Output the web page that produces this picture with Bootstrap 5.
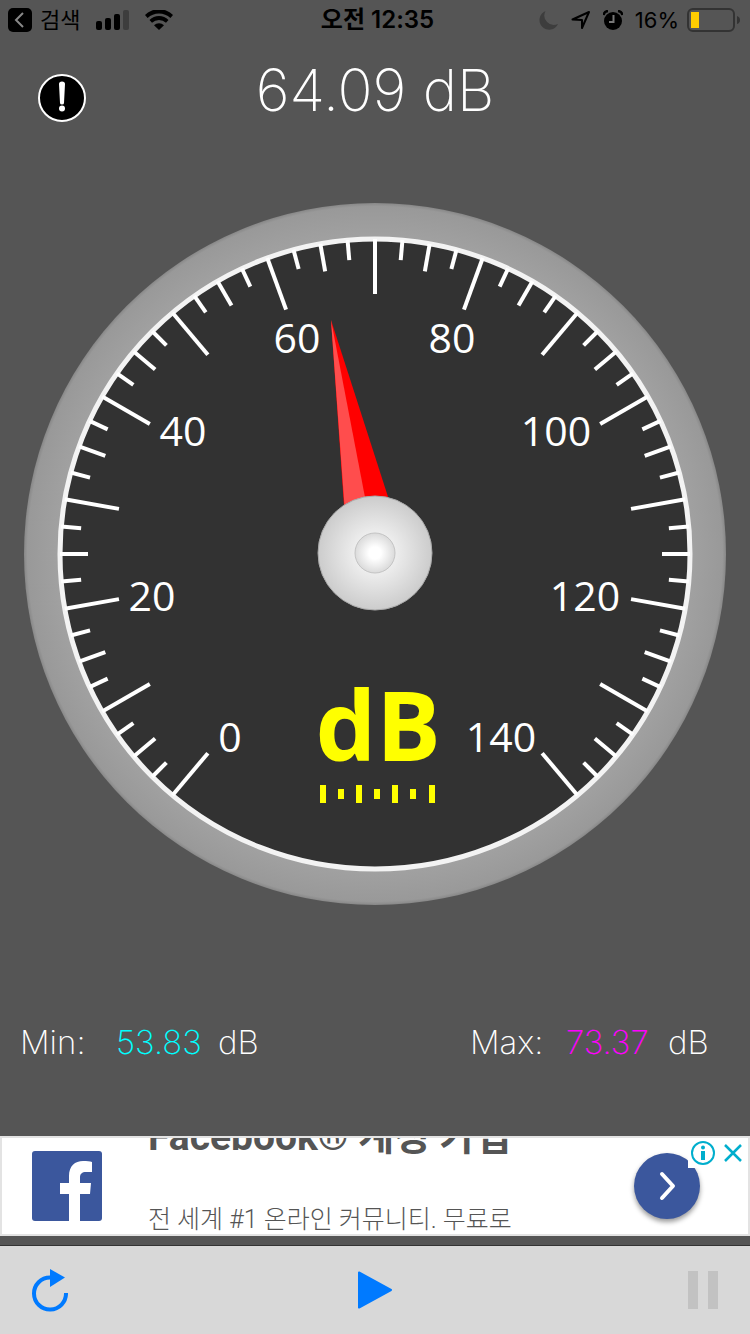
<!DOCTYPE html>
<html lang="ko">
<head>
<meta charset="utf-8">
<meta name="viewport" content="width=device-width, initial-scale=1">
<title>Sound Meter</title>
<link href="https://cdn.jsdelivr.net/npm/bootstrap@5.3.0/dist/css/bootstrap.min.css" rel="stylesheet">
<style>
  body { background: #555; color: #fff; font-family: Inter, "Noto Sans CJK KR", sans-serif; }
  .app-screen { min-height: 100vh; }
  svg { display: block; }

  .status-bar { display: grid; grid-template-columns: 1fr auto 1fr; height: 40px; padding: 0 10px 0 8px; color: #000; font-size: 22px; line-height: 40px; }
  .status-time { font-weight: 600; font-size: 24px; padding-left: 7px; }
  .status-icons { gap: 12px; }
  .back-link, .back-link:hover { color: #000; }

  .meter-head { display: grid; grid-template-columns: 48px 1fr 48px; min-height: 62px; margin-top: 20px; padding: 0 38px; }
  .reading { font-weight: 200; font-size: 58px; line-height: 60px; }
  .gauge-wrap { padding-top: 81px; }
  .dial-num { font: 400 41px "Open Sans", sans-serif; fill: #fff; text-anchor: middle; }
  .dial-unit { font: 700 96px "Open Sans", sans-serif; fill: #ff0; text-anchor: middle; }

  .stats { padding: 113px 44px 69px 20px; font-weight: 200; font-size: 33px; line-height: 48px; }
  .stat-item { display: grid; grid-template-columns: 96px 102px 38px; }
  .min-val { color: #0ff; }
  .max-val { color: #f0f; }

  .ad-banner { height: 100px; background: #fff; border: 2px solid #e3e3e3; color: #555; padding: 0 48px 0 30px; gap: 46px; }
  .ad-copy { height: 96px; overflow: hidden; }
  .ad-title { font-family: Roboto, "Noto Sans CJK KR", sans-serif; font-weight: 700; font-size: 39px; line-height: 48px; margin-top: -25px; }
  .ad-text { font-family: Roboto, "Noto Sans CJK KR", sans-serif; font-weight: 300; font-size: 25px; line-height: 32px; margin-top: 43px; }
  .ad-go { width: 66px; height: 66px; background: #3b579d; box-shadow: 0 3px 5px rgba(0,0,0,.4); }
  .ad-choices { top: 0; right: 0; height: 30px; padding: 0 5px 0 3px; gap: 8px; background: #fff; }

  .tool-bar { display: grid; grid-template-columns: 1fr auto 1fr; align-items: center; height: 89px; margin-top: 9px; padding: 0 32px; background: #d8d8d8; border-top: 1px solid #333; }
</style>
</head>
<body>
<div class="app-screen d-flex flex-column">

  <div class="status-bar">
    <div class="d-flex align-items-center">
      <a href="#" class="back-link d-flex align-items-center gap-2 text-decoration-none">
        <svg width="24" height="24" viewBox="0 0 24 24"><rect width="24" height="24" rx="5" fill="#000"/><path d="M15 5 8 12l7 7" fill="none" stroke="#888" stroke-width="2"/></svg>
        <span>검색</span>
      </a>
      <svg class="ms-3" width="33" height="20" viewBox="0 0 33 20"><rect y="11" width="6" height="9" rx="2"/><rect x="9" y="8" width="6" height="12" rx="2"/><rect x="18" y="4" width="6" height="16" rx="2"/><rect x="27" width="6" height="20" rx="2" fill="#3d3d3d"/></svg>
      <svg class="ms-3" width="28" height="20" viewBox="0 0 28 20"><path d="M0 5a20 20 0 0 1 28 0l-2.600 3a16.500 16.500 0 0 0-22.800 0z"/><path d="M4.500 10a13.500 13.500 0 0 1 19 0l-2.500 2.800a10 10 0 0 0-14 0z"/><path d="M9 15.200a7.200 7.200 0 0 1 10 0L14 20z"/></svg>
    </div>
    <div class="status-time">오전 12:35</div>
    <div class="status-icons d-flex align-items-center justify-content-end">
      <svg width="20" height="20" viewBox="0 0 20 20"><path d="M6.500 1A9.700 9.700 0 1 0 19 14 9.500 9.500 0 0 1 6.500 1z" fill="#3d3d3d"/></svg>
      <svg width="20" height="20" viewBox="0 0 20 20"><path d="M1.500 9.500 18 2l-7 16V10z" fill="none" stroke="#000" stroke-width="2" stroke-linejoin="round"/></svg>
      <svg width="20" height="20" viewBox="0 0 20 20"><circle cx="10" cy="11" r="9"/><path d="M.5 5A5 5 0 0 1 5 1M15 1a5 5 0 0 1 4.500 4" fill="none" stroke="#000" stroke-width="2.500"/><path d="M10.500 5v7H6" fill="none" stroke="#777" stroke-width="2"/></svg>
      <div class="d-flex align-items-center gap-2">
        <span>16%</span>
        <svg width="53" height="24" viewBox="0 0 53 24"><rect x="1" y="1" width="46" height="22" rx="5" fill="none" stroke="#333" stroke-width="2"/><rect x="4" y="4" width="8" height="16" fill="#fc0"/><path d="M50 8q3 1 3 4t-3 4z" fill="#333"/></svg>
      </div>
    </div>
  </div>

  <header class="meter-head">
    <button type="button" class="btn p-0 border-0 align-self-end" aria-label="Info">
      <svg width="48" height="48" viewBox="0 0 48 48"><circle cx="24" cy="24" r="23" fill="#000" stroke="#fff" stroke-width="2"/><path d="M21 10q0-2.500 3-2.500t3 2.500l-1 19q0 1.500-2 1.500t-2-1.500z" fill="#fff"/><circle cx="24" cy="34.500" r="3" fill="#fff"/></svg>
    </button>
    <h1 class="reading text-center text-nowrap m-0">64.09 dB</h1>
  </header>

  <main class="flex-grow-1">
    <div class="gauge-wrap px-4">
      <svg class="w-100 h-auto" viewBox="0 0 702 702" role="img" aria-label="64.09 dB">
        <defs>
          <radialGradient id="rim" gradientUnits="userSpaceOnUse" cx="351" cy="351" r="351"><stop offset=".9" stop-color="#a1a1a1"/><stop offset=".99" stop-color="#999"/><stop offset="1" stop-color="#888"/></radialGradient>
          <radialGradient id="hub"><stop offset=".3" stop-color="#f0f0f0"/><stop offset="1" stop-color="#ccc"/></radialGradient>
          <radialGradient id="cap"><stop offset=".3" stop-color="#fff"/><stop offset="1" stop-color="#dadada"/></radialGradient>
          <path id="major" d="M351 36v55"/>
          <g id="step">
            <use href="#major"/>
            <path d="M351 36v20" transform="rotate(5 351 351)"/>
            <path d="M351 36v28" transform="rotate(10 351 351)"/>
            <path d="M351 36v20" transform="rotate(15 351 351)"/>
          </g>
        </defs>
        <circle cx="351" cy="351" r="351" fill="url(#rim)"/>
        <circle cx="351" cy="351" r="315" fill="#323232" stroke="#f3f3f3" stroke-width="5"/>
        <g stroke="#fff" stroke-width="4">
          <use href="#step" transform="rotate(-140 351 351)"/><use href="#step" transform="rotate(-120 351 351)"/>
          <use href="#step" transform="rotate(-100 351 351)"/><use href="#step" transform="rotate(-80 351 351)"/>
          <use href="#step" transform="rotate(-60 351 351)"/><use href="#step" transform="rotate(-40 351 351)"/>
          <use href="#step" transform="rotate(-20 351 351)"/><use href="#step"/>
          <use href="#step" transform="rotate(20 351 351)"/><use href="#step" transform="rotate(40 351 351)"/>
          <use href="#step" transform="rotate(60 351 351)"/><use href="#step" transform="rotate(80 351 351)"/>
          <use href="#step" transform="rotate(100 351 351)"/><use href="#step" transform="rotate(120 351 351)"/>
          <use href="#major" transform="rotate(140 351 351)"/>
        </g>
        <g class="dial-num">
          <text x="206" y="549">0</text><text x="128" y="408">20</text><text x="159" y="243">40</text><text x="273" y="150">60</text>
          <text x="428" y="150">80</text><text x="532" y="243">100</text><text x="561" y="408">120</text><text x="477" y="549">140</text>
        </g>
        <text class="dial-unit" x="354" y="558">dB</text>
        <path d="M299 582v18M335 582v18M371 582v18M408 582v18M317 586v10M353 586v10M389 586v10" stroke="#ff0" stroke-width="6"/>
        <path d="M307 117 320 303l46-3z" fill="red"/>
        <path d="M307 117 321 310l23 0z" fill="#ff4d4d"/>
        <circle cx="351" cy="350" r="57" fill="url(#hub)" stroke="#aaa"/>
        <circle cx="351" cy="350" r="20" fill="url(#cap)" stroke="#c4c4c4"/>
      </svg>
    </div>
    <div class="stats d-flex justify-content-between text-nowrap">
      <div class="stat-item"><span>Min:</span><span class="min-val">53.83</span><span>dB</span></div>
      <div class="stat-item"><span>Max:</span><span class="max-val">73.37</span><span>dB</span></div>
    </div>
  </main>

  <aside class="ad-banner d-flex align-items-center position-relative">
    <svg class="flex-shrink-0" width="70" height="70" viewBox="0 0 70 70"><rect width="70" height="70" rx="3" fill="#3b579d"/><path d="M37 70V43h-9V32h9v-7c0-10 6-15 14-15 4 0 7 0 9 1v10h-6c-4 0-6 2-6 5v6h11l-1 11H48v27z" fill="#fff"/></svg>
    <div class="ad-copy flex-grow-1">
      <div class="ad-title text-nowrap">Facebook® 계정 가입</div>
      <div class="ad-text text-nowrap">전 세계 #1 온라인 커뮤니티. 무료로</div>
    </div>
    <button type="button" class="ad-go btn p-0 border-0 rounded-circle d-flex align-items-center justify-content-center flex-shrink-0" aria-label="Open">
      <svg width="20" height="32" viewBox="0 0 20 32"><path d="M5 4l11 12L5 28" fill="none" stroke="#fff" stroke-width="4" stroke-linecap="round" stroke-linejoin="round"/></svg>
    </button>
    <div class="ad-choices d-flex align-items-center position-absolute">
      <svg width="24" height="24" viewBox="0 0 24 24"><circle cx="12" cy="12" r="11" fill="none" stroke="#00aecd" stroke-width="2"/><circle cx="12" cy="6.500" r="2" fill="#00aecd"/><path d="M12 10v9" stroke="#00aecd" stroke-width="4"/></svg>
      <button type="button" class="btn p-0 border-0" aria-label="Close"><svg width="20" height="20" viewBox="0 0 20 20"><path d="M2 2l16 16M18 2 2 18" stroke="#00aecd" stroke-width="2.500"/></svg></button>
    </div>
  </aside>

  <footer class="tool-bar">
    <button type="button" class="btn p-0 border-0 me-auto" aria-label="Reset"><svg width="36" height="44" viewBox="0 0 36 44"><path d="M34 25A16 16 0 1 1 18 9.500" fill="none" stroke="#007aff" stroke-width="4"/><path d="M18 1l15 8.500L18 19z" fill="#007aff"/></svg></button>
    <button type="button" class="btn p-0 border-0" aria-label="Play"><svg width="36" height="40" viewBox="0 0 36 40"><path d="M2 2.500 34 20 2 37.500z" fill="#007aff" stroke="#007aff" stroke-width="2" stroke-linejoin="round"/></svg></button>
    <button type="button" class="btn p-0 border-0 ms-auto opacity-100" aria-label="Pause" disabled><svg width="30" height="38" viewBox="0 0 30 38"><path d="M0 0h10v38H0zM20 0h10v38H20z" fill="#c2c2c2"/></svg></button>
  </footer>
</div>
<script src="https://cdn.jsdelivr.net/npm/bootstrap@5.3.0/dist/js/bootstrap.bundle.min.js"></script>
</body>
</html>
